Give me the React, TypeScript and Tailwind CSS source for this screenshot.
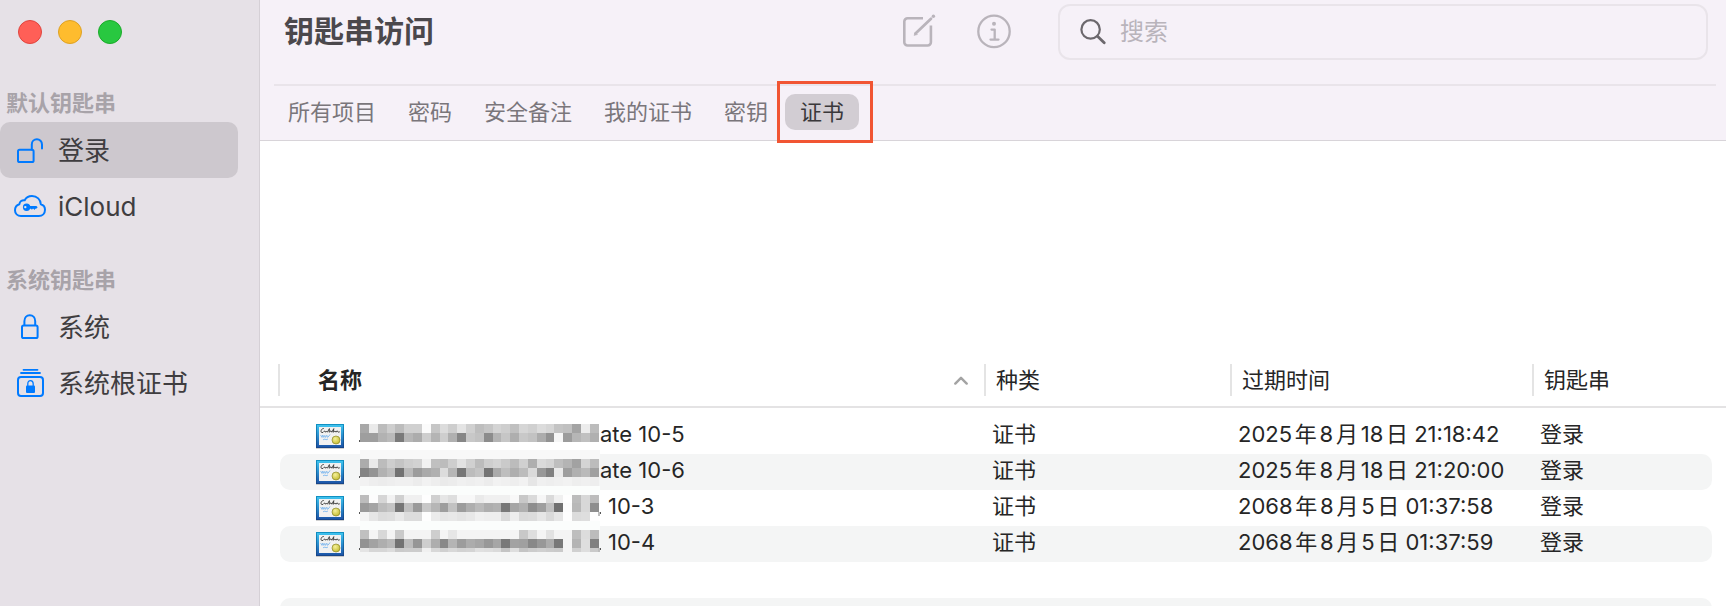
import type { ReactNode } from "react";

const blue = "#007aff";

function UnlockedIcon() {
  return (
    <svg width="36" height="36" viewBox="0 0 36 36" fill="none" stroke={blue} strokeWidth="2" strokeLinecap="round" aria-hidden="true">
      <rect x="6" y="17.8" width="15.6" height="12.2" rx="1.6" />
      <path d="M19.8 17.5V12.4a5.1 5.1 0 0 1 10.2 0v4.2" />
    </svg>
  );
}

function CloudKeyIcon() {
  return (
    <svg width="36" height="36" viewBox="0 0 36 36" fill="none" stroke={blue} strokeWidth="2" strokeLinejoin="round" aria-hidden="true">
      <path d="M9 28C5.5 28 3 25.6 3 22.2c0-2.9 1.9-5.2 4.4-5.9C7.6 13.4 10 11.8 12.7 12.2 14 9.500 16.800 8 20 8c5 0 8.600 3.600 8.800 8.200 2.600.7 4.200 3 4.200 5.600 0 3.500-2.600 6.200-6.200 6.200z" />
      <g stroke="none" fill={blue}>
        <path
          fillRule="evenodd"
          d="M14.600 15.500a3.700 3.700 0 1 0 0 7.400a3.700 3.700 0 1 0 0-7.400zM13.300 17.900a1.200 1.200 0 1 1 0 2.400a1.200 1.200 0 1 1 0-2.400z"
        />
        <path d="M17 18h7.400l1.300 1.200-1.500 1.500h-1l-.7 1.300-1-1.300h-.8l-.8 1-.9-1H17z" />
      </g>
    </svg>
  );
}

function LockIcon() {
  return (
    <svg width="36" height="36" viewBox="0 0 36 36" fill="none" stroke={blue} strokeWidth="2" aria-hidden="true">
      <rect x="10" y="16.6" width="15.6" height="12.4" rx="1.6" />
      <path d="M12.4 16.6v-4.4c0-3.5 2.2-6 5.4-6s5.4 2.5 5.4 6v4.4" />
    </svg>
  );
}

function StackedLockIcon() {
  return (
    <svg width="36" height="36" viewBox="0 0 36 36" fill="none" stroke={blue} strokeWidth="1.8" strokeLinecap="round" aria-hidden="true">
      <path d="M11.5 4.8h14M9 8h19" />
      <rect x="6" y="12" width="25" height="19" rx="3" strokeWidth="2" />
      <rect x="14" y="20.4" width="9" height="7.6" rx="1" fill={blue} stroke="none" />
      <path d="M15.8 20.6v-1.8c0-2 1.1-3.2 2.7-3.2s2.7 1.2 2.7 3.2v1.8" strokeWidth="1.3" />
    </svg>
  );
}

function CertificateIcon({ id }: { id: string }) {
  return (
    <svg width="28" height="25" viewBox="0 0 28 25" aria-hidden="true" className="shrink-0">
      <defs>
        <linearGradient id={`frame-${id}`} x1="0" y1="0" x2="0" y2="1">
          <stop offset="0" stopColor="#3fc3ee" />
          <stop offset="0.5" stopColor="#2a8fd0" />
          <stop offset="1" stopColor="#1c55a8" />
        </linearGradient>
        <linearGradient id={`edge-${id}`} x1="0" y1="0" x2="0" y2="1">
          <stop offset="0" stopColor="#1192c4" />
          <stop offset="1" stopColor="#174488" />
        </linearGradient>
        <radialGradient id={`seal-${id}`} cx="0.4" cy="0.35" r="0.7">
          <stop offset="0" stopColor="#f5f19a" />
          <stop offset="1" stopColor="#c2b92c" />
        </radialGradient>
      </defs>
      <rect y="1" width="28" height="24" fill="#000" opacity="0.18" />
      <rect width="28" height="24" fill={`url(#edge-${id})`} />
      <rect x="1" y="1" width="26" height="22" fill={`url(#frame-${id})`} />
      <rect x="3" y="3" width="22" height="18" fill="#f1f1f1" />
      <path
        d="M8 4.600c-2.400-.8-4.200 3.600-2 4 1.800.2 1.600-1.800 2.800-1.600.2 1.400 1 1.200 1.600 0l1 1.200 2-3.600-.2 3.600 1.800-1.400.8 1.400 2-3.600-.6 3.600 1.800-1.200 1 1.200 1.200-1.400 1 1.400 1.600-.4"
        fill="none"
        stroke="#3a3a3a"
        strokeWidth="0.9"
      />
      <path
        d="M4.600 11l1.400 2.400.8-2.400 1 2.400 1-2 .8 2 1.200-2.200.8 2.200 1.400-1.400 1-1.600M7 15.800l2-.8 1 .8 2-.8"
        fill="none"
        stroke="#7fb8ee"
        strokeWidth="0.9"
      />
      <circle cx="20" cy="16" r="4" fill={`url(#seal-${id})`} stroke="#8d8a2a" strokeWidth="0.7" />
    </svg>
  );
}

type Band = { y: number; h: number; cells?: string; fill?: string };

/* Redacted name: each band holds one two-digit grey level per block. */
function Redaction({ bands, tail }: { bands: Band[]; tail: boolean }) {
  const size = 240 / 27.15;
  return (
    <svg width="240" height="36" viewBox="0 0 240 36" shapeRendering="crispEdges" aria-hidden="true" className="shrink-0 overflow-visible">
      {bands.map((b) =>
        b.cells ? (
          b.cells.split(" ").map((g, i) => (
            <rect key={`${b.y}-${i}`} x={i * size} y={b.y} width={size + 0.3} height={b.h} fill={`#${g}${g}${g}`} />
          ))
        ) : (
          <rect key={b.y} x="0" y={b.y} width="240" height={b.h} fill={b.fill} />
        ),
      )}
      <rect x="-1" y="22" width="1" height="2" fill="#555" />
      {tail && <path d="M238 22h2v4h-2z" fill="#bdbdbd" />}
      {tail && <rect x="240" y="22" width="1" height="2" fill="#555" />}
    </svg>
  );
}

type Row = { name: string; tight: boolean; date: string; bands: Band[] };

const rows: Row[] = [
  {
    name: "ate 10-5",
    tight: true,
    date: "2025年8月18日 21:18:42",
    bands: [
      { y: 6, h: 9, cells: "A8 EA BC CE BC D0 D0 FB C6 DC CE E4 D0 BE C6 D4 CE C0 D6 D0 DC D6 C4 C0 A4 EC BC" },
      { y: 15, h: 9, cells: "9E 9E B2 BA 7A B6 AC CE B4 CE B0 86 C8 C2 8C B4 C6 AE C8 C2 AC 92 F6 9C B6 C0 B0" },
      { y: 32, h: 4, fill: "#f8f8f8" },
    ],
  },
  {
    name: "ate 10-6",
    tight: true,
    date: "2025年8月18日 21:20:00",
    bands: [
      { y: 0, h: 5, fill: "#f8f8f8" },
      { y: 5, h: 9, cells: "AC EA BC CE C4 CE D2 F2 C0 BC CE E2 D0 BC CE D4 CA BC D0 AE DA D4 BE B4 A2 D4 BC" },
      { y: 14, h: 9, cells: "84 94 B2 BE 72 BA 9C AA B0 DC B6 76 BC C4 74 AA BE AE BC DA 98 80 EA 9E B0 BA A0" },
      { y: 23, h: 9, cells: "F2 EE EC EE F0 F0 EC F2 EE EA EC F0 EE F0 EC F2 F0 EE F2 E6 F0 EE F0 F2 EE F0 EE" },
      { y: 32, h: 4, fill: "#fbfdfc" },
    ],
  },
  {
    name: "10-3",
    tight: false,
    date: "2068年8月5日 01:37:58",
    bands: [
      { y: 0, h: 5, fill: "#fbfdfc" },
      { y: 5, h: 8, cells: "BC FC D6 F2 D0 F0 F0 FE D0 E6 DE F8 F8 EA F0 F0 F0 F8 C8 DA F6 DA F0 FE BC D8 BC" },
      { y: 13, h: 9, cells: "9A A4 BC C4 76 C0 9A C8 B6 9E C2 9C AE BA AE B2 78 A6 B0 8E 9E C0 70 FC B8 D8 8E" },
      { y: 22, h: 9, cells: "F4 E6 DC DE E8 DC DC FE EC E6 E8 E4 E8 F0 EE EE DA EE DA DC E6 DA E6 FE DC DE FE" },
      { y: 31, h: 5, fill: "#fbfdfc" },
    ],
  },
  {
    name: "10-4",
    tight: false,
    date: "2068年8月5日 01:37:59",
    bands: [
      { y: 0, h: 4, fill: "#fbfdfc" },
      { y: 4, h: 9, cells: "C0 F4 D8 F4 CA F4 F4 F4 CE F4 E6 F4 F4 F4 F4 F4 F4 F4 C8 DE F4 E2 F4 F4 BE DC BC" },
      { y: 13, h: 9, cells: "92 A2 AE B8 72 BC 96 CE AE 88 B4 9C AC A6 98 A6 78 A2 A0 88 98 AC 78 F4 B4 DE 80" },
      { y: 22, h: 4, cells: "E4 D6 D6 DC CA CC CC F0 D8 D0 D8 D2 D4 E0 DE DA C4 DE C4 CC D0 CC CA F4 D0 DE CA" },
    ],
  },
];

const categories = ["所有项目", "密码", "安全备注", "我的证书", "密钥"];

function SidebarItem({ icon, label, active = false }: { icon: ReactNode; label: string; active?: boolean }) {
  return (
    <li>
      <button
        type="button"
        aria-current={active}
        className={`flex h-14 w-full items-center gap-2.5 rounded-[10px] pl-3 text-left text-[26px] text-[#3f3d40] ${active ? "bg-[#cdc8ce]" : ""}`}
      >
        {icon}
        <span className="pt-0.5">{label}</span>
      </button>
    </li>
  );
}

function HeaderCell({ children }: { children: ReactNode }) {
  return (
    <th scope="col" className="border-b-2 border-[#e4e3e4] py-2.5 font-normal">
      <div className="flex h-8 items-center border-l-2 border-[#e4e4e4] pl-2.5">{children}</div>
    </th>
  );
}

export default function App() {
  return (
    <div className="flex h-screen overflow-hidden bg-white font-['Inter','Noto_Sans_CJK_SC',sans-serif] text-[22px] leading-8 text-[#262626]">
      <aside className="w-[260px] shrink-0 border-r border-[#d5d0d6] bg-[#e6e1e7]">
        <div className="flex gap-4 px-[18px] pt-5">
          <button type="button" aria-label="关闭" className="size-6 rounded-full border border-[#e0443e] bg-[#ff5f57]" />
          <button type="button" aria-label="最小化" className="size-6 rounded-full border border-[#dea123] bg-[#febc2e]" />
          <button type="button" aria-label="缩放" className="size-6 rounded-full border border-[#1aab29] bg-[#28c840]" />
        </div>
        <nav className="pt-[43px] pr-[21px]">
          <h2 className="pb-[3px] pl-1.5 font-bold text-[#a8a3a9]">默认钥匙串</h2>
          <ul>
            <SidebarItem icon={<UnlockedIcon />} label="登录" active />
            <SidebarItem icon={<CloudKeyIcon />} label="iCloud" />
          </ul>
          <h2 className="pt-[30px] pb-[3px] pl-1.5 font-bold text-[#a8a3a9]">系统钥匙串</h2>
          <ul>
            <SidebarItem icon={<LockIcon />} label="系统" />
            <SidebarItem icon={<StackedLockIcon />} label="系统根证书" />
          </ul>
        </nav>
      </aside>

      <main className="flex min-w-0 flex-1 flex-col">
        <header className="border-b border-[#d8d4d9] bg-[#f6f1f8]">
          <div className="flex h-[84px] items-start pt-1 pr-[18px] pl-6">
            <h1 className="flex h-14 flex-1 items-center pb-0.5 text-[30px] font-bold text-[#4b484c]">钥匙串访问</h1>
            <div className="flex h-14 items-center gap-10 pr-[46px]">
              <button type="button" aria-label="新建">
                <svg width="36" height="36" viewBox="0 2 36 36" fill="none" stroke="#b9b4bb" strokeWidth="2.600" strokeLinecap="round">
                  <path d="M23 6.300H7.600a3.300 3.300 0 0 0-3.300 3.300v20.600a3.300 3.300 0 0 0 3.300 3.300h20a3.300 3.300 0 0 0 3.300-3.300V13.500" strokeLinecap="butt" />
                  <path d="M15.500 21.500L31 6.800" strokeWidth="2.800" />
                  <path d="M14.200 23.200l1-3 2 2z" fill="#b9b4bb" strokeWidth="0.600" />
                  <circle cx="33.400" cy="4.200" r="1.700" fill="#b9b4bb" stroke="none" />
                </svg>
              </button>
              <button type="button" aria-label="简介">
                <svg width="36" height="36" viewBox="0 0 36 36" fill="none" stroke="#b9b4bb" strokeWidth="2.300" strokeLinecap="round" strokeLinejoin="round">
                  <circle cx="18" cy="17.400" r="15.700" />
                  <path d="M15.500 15.600h3.200v10M14.500 25.600h8" />
                  <circle cx="18" cy="9.800" r="2" fill="#b9b4bb" stroke="none" />
                </svg>
              </button>
            </div>
            <label className="flex h-14 w-[650px] items-center gap-3.5 rounded-xl border-2 border-[#e9e4ea] pl-5">
              <svg width="26" height="26" viewBox="0 0 26 26" fill="none" stroke="#6c686d" strokeWidth="2.200" strokeLinecap="round" aria-hidden="true" className="shrink-0">
                <circle cx="10.600" cy="10.400" r="9.200" />
                <path d="M17.500 17.300l6.700 6.500" strokeWidth="2.800" />
              </svg>
              <input
                type="search"
                aria-label="搜索"
                placeholder="搜索"
                className="min-w-0 flex-1 bg-transparent text-2xl outline-none placeholder:text-[#b9b4bb]"
              />
            </label>
          </div>
          <div className="mr-2.5 ml-3.5 border-t-2 border-[#e9e4ea]" />
          <nav className="flex h-[54px] items-center gap-0.5 pb-0.5 pl-[13px] text-[#7a767b]">
            {categories.map((c) => (
              <button key={c} type="button" className="h-9 rounded-[10px] px-[15px]">
                {c}
              </button>
            ))}
            <div className="relative">
              <button type="button" aria-pressed="true" className="block h-9 rounded-[10px] bg-[#d2cdd3] px-[15px] text-[#3a383b]">
                证书
              </button>
              <span className="pointer-events-none absolute -inset-y-[13px] -right-3.5 -left-2 border-3 border-[#f15533]" />
            </div>
          </nav>
        </header>

        <section aria-label="证书" className="min-h-0 flex-1 overflow-hidden pt-[213px]">
          <table className="w-full table-fixed border-separate border-spacing-0 text-left">
            <colgroup>
              <col className="w-5" />
              <col />
              <col className="w-[246px]" />
              <col className="w-[302px]" />
              <col className="w-[180px]" />
              <col className="w-3.5" />
            </colgroup>
            <thead>
              <tr>
                <td className="border-b-2 border-[#e4e3e4] py-2.5">
                  <div className="h-8 border-r-2 border-[#e4e4e4]" />
                </td>
                <th scope="col" aria-sort="ascending" className="border-b-2 border-[#e4e3e4] py-2.5">
                  <div className="flex h-8 items-center justify-between pr-4 pl-[38px] font-bold">
                    名称
                    <svg width="14" height="9" viewBox="0 0 14 9" fill="none" stroke="#a3a3a3" strokeWidth="2.400" strokeLinecap="round" strokeLinejoin="round" aria-hidden="true">
                      <path d="M1.300 7.600L7 1.800l5.700 5.800" />
                    </svg>
                  </div>
                </th>
                <HeaderCell>种类</HeaderCell>
                <HeaderCell>过期时间</HeaderCell>
                <HeaderCell>钥匙串</HeaderCell>
                <td className="border-b-2 border-[#e4e3e4]" />
              </tr>
            </thead>
            <tbody>
              <tr>
                <td colSpan={6} className="h-2.5 p-0" />
              </tr>
              {rows.map((r, i) => {
                const bg = i % 2 ? "bg-[#f4f5f5]" : "";
                return (
                  <tr key={r.name} className="h-9">
                    <td className="p-0" />
                    <td className={`rounded-l-[10px] p-0 ${bg}`}>
                      <div className="flex h-9 items-center gap-4 pl-9">
                        <CertificateIcon id={r.name.replace(" ", "")} />
                        <div className="flex items-center">
                          <Redaction bands={r.bands} tail={!r.tight} />
                          <span className={`pb-1 ${r.tight ? "" : "pl-2"}`}>{r.name}</span>
                        </div>
                      </div>
                    </td>
                    <td className={`p-0 ${bg}`}>
                      <div className="pb-1 pl-2">证书</div>
                    </td>
                    <td className={`p-0 whitespace-nowrap ${bg}`}>
                      <div className="pb-1 pl-2 [text-autospace:normal]">{r.date}</div>
                    </td>
                    <td className={`rounded-r-[10px] p-0 ${bg}`}>
                      <div className="pb-1 pl-2">登录</div>
                    </td>
                    <td className="p-0" />
                  </tr>
                );
              })}
              <tr className="h-9">
                <td colSpan={6} className="p-0" />
              </tr>
              <tr className="h-9">
                <td className="p-0" />
                <td colSpan={4} className="rounded-[10px] bg-[#f4f5f5] p-0" />
                <td className="p-0" />
              </tr>
            </tbody>
          </table>
        </section>
      </main>
    </div>
  );
}
